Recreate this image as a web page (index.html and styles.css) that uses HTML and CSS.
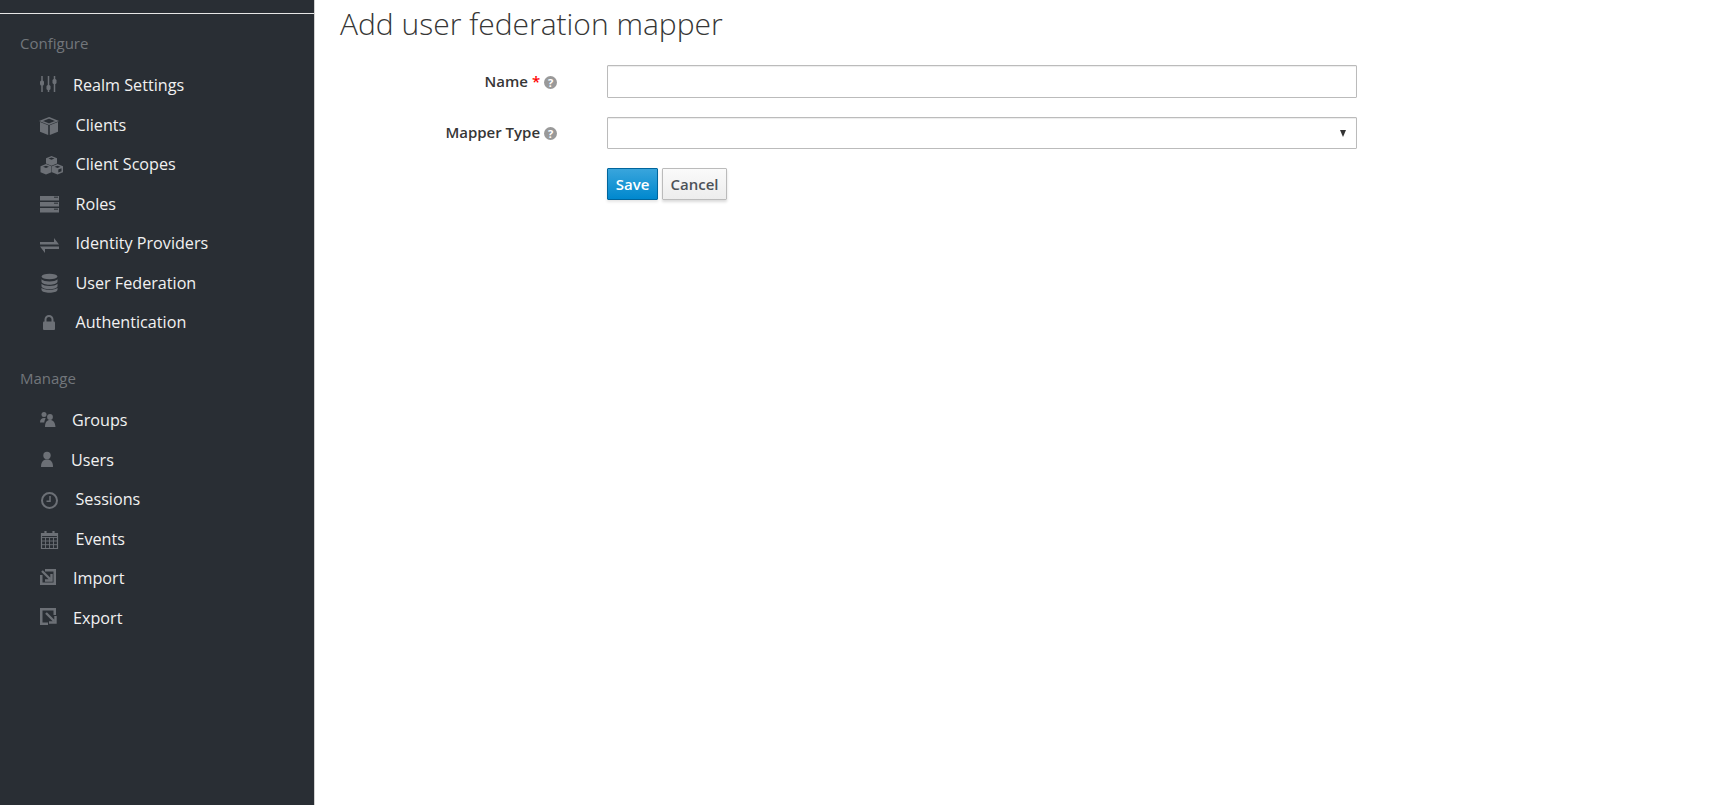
FILE: index.html
```html
<!DOCTYPE html>
<html lang="en">
<head>
<meta charset="utf-8">
<title>Add user federation mapper</title>
<link rel="stylesheet" href="styles.css">
</head>
<body>
<div class="app">
  <aside class="sidebar">
    <div class="sidebar-top"></div>
    <h2 class="nav-heading">Configure</h2>
    <ul class="nav">
      <li class="nav-item"><span class="slot slot-33"><svg viewBox="0 0 24 20"><path d="M2 1v16M8.500 1v16M14.500 1v16" stroke="currentColor" stroke-width="1.500" fill="none"/><rect x="0" y="5.500" width="4" height="5" rx="1.500" fill="currentColor"/><rect x="6.500" y="10" width="4" height="5" rx="1.500" fill="currentColor"/><rect x="12.500" y="4" width="4" height="5" rx="1.500" fill="currentColor"/></svg></span>Realm Settings</li>
      <li class="nav-item"><span class="slot slot-35"><svg viewBox="0 0 24 20"><path d="M9 2.800l8 3.200L9 9.200 1 6z" fill="none" stroke="currentColor" stroke-width="1.500"/><path d="M0 7l8.200 3.300V20L0 16.700zM18 7l-8.200 3.300V20l8.200-3.300z" fill="currentColor"/></svg></span>Clients</li>
      <li class="nav-item"><span class="slot slot-35"><svg viewBox="0 0 24 20"><g fill="currentColor"><path d="M11.500 2l5.500 2.200v5.300l-5.500 2.200L6 9.500V4.200zM11.500 3.500l-3 1.100 3 1.200 3-1.200z"/><path d="M6 10l5.500 2.200v6L6 20.500.5 18.200v-6zM6 11.700l-3 1.100 3 1.200 3-1.200z"/><path d="M17.500 10l5.500 2.200v6l-5.500 2.300-5.500-2.300v-6zM17.500 11.700l-3 1.100 3 1.200 3-1.200zM18.300 15.500v3l3.200-1.300v-3z"/></g></svg></span>Client Scopes</li>
      <li class="nav-item"><span class="slot slot-35"><svg viewBox="0 0 24 20"><path d="M0 2h19v4.500H0zM0 8h19v4.500H0zM0 14h19v4.500H0z" fill="currentColor"/><path d="M14 3.200h4M14 9.200h4M14 15.200h4" stroke="#292e34" stroke-width="1"/></svg></span>Roles</li>
      <li class="nav-item"><span class="slot slot-35"><svg viewBox="0 0 24 20"><path d="M0 9h14V5l5 6.500H0zM0 13.500h19V16H5v4z" fill="currentColor"/></svg></span>Identity Providers</li>
      <li class="nav-item"><span class="slot slot-35"><svg viewBox="0 0 24 20"><g fill="currentColor"><ellipse cx="9.500" cy="3.500" rx="8" ry="2.800"/><path d="M1.500 6.200c1.500 1.500 4.500 2.200 8 2.200s6.500-.7 8-2.200v2.600c-.5 1.800-4 3-8 3s-7.500-1.200-8-3z"/><path d="M1.500 10.700c1.500 1.500 4.500 2.200 8 2.200s6.500-.7 8-2.200v2.600c-.5 1.800-4 3-8 3s-7.500-1.200-8-3z"/><path d="M1.500 14.800c1.500 1.500 4.500 2.100 8 2.100s6.500-.6 8-2.100v2.100c-.5 1.700-4 2.800-8 2.800s-7.500-1.100-8-2.800z"/></g></svg></span>User Federation</li>
      <li class="nav-item"><span class="slot slot-35"><svg viewBox="0 0 24 20"><path d="M5.500 10V7.500a3.500 3.500 0 0 1 7 0V10" fill="none" stroke="currentColor" stroke-width="2"/><rect x="3" y="9.500" width="12" height="8.500" rx="1" fill="currentColor"/></svg></span>Authentication</li>
    </ul>
    <h2 class="nav-heading nav-heading-manage">Manage</h2>
    <ul class="nav">
      <li class="nav-item"><span class="slot slot-32"><svg viewBox="0 0 24 20"><g fill="currentColor"><circle cx="4" cy="4.500" r="2.500"/><circle cx="10" cy="7" r="2.900"/><path d="M0 12.500c0-3 1.500-4.500 4-4.500 .7 0 1.200.1 1.700.3C5 9.500 4.500 10.700 4.300 12.500zM5 17c0-4.500 1.800-7 5-7s5.200 2.500 5.500 7z"/></g></svg></span>Groups</li>
      <li class="nav-item"><span class="slot slot-31"><svg viewBox="0 0 24 20"><circle cx="7" cy="5.500" r="3.700" fill="currentColor"/><path d="M1 17c0-5 2-7.500 6-7.500s6 2.500 6 7.500z" fill="currentColor"/></svg></span>Users</li>
      <li class="nav-item"><span class="slot slot-35"><svg viewBox="0 0 24 20"><circle cx="9.500" cy="11.500" r="7.500" fill="none" stroke="currentColor" stroke-width="2"/><path d="M10 7v5.200H6.500" fill="none" stroke="currentColor" stroke-width="1.500"/></svg></span>Sessions</li>
      <li class="nav-item"><span class="slot slot-35"><svg viewBox="0 0 24 20"><path d="M1.500 4.500h16V19.500h-16z" fill="none" stroke="currentColor" stroke-width="1.200"/><path d="M1.500 8.500h16M1.500 12h16M1.500 15.700h16M5.500 8.500v11M9.500 8.500v11M13.500 8.500v11" stroke="currentColor" stroke-width=".9" fill="none"/><path d="M1.500 5.500h16" stroke="currentColor" stroke-width="3"/><path d="M5.500 2v4M13.500 2v4" stroke="currentColor" stroke-width="2.200"/></svg></span>Events</li>
      <li class="nav-item"><span class="slot slot-33"><svg viewBox="0 0 24 20"><path d="M5 1h11v16H0V7h2.500v7.500h11V3.500H5z" fill="currentColor"/><path d="M2 3l8 8M11.500 6v6.500H5" fill="none" stroke="currentColor" stroke-width="2.400"/></svg></span>Import</li>
      <li class="nav-item"><span class="slot slot-33"><svg viewBox="0 0 24 20"><path d="M0 0h16v7h-2.500V2.500h-11v12H8V17H0z" fill="currentColor"/><path d="M6 5l8 8M15.500 8v6.500H9" fill="none" stroke="currentColor" stroke-width="2.400"/></svg></span>Export</li>
    </ul>
  </aside>
  <main class="content">
    <h1 class="title">Add user federation mapper</h1>
    <form class="form">
      <div class="form-row">
        <label class="form-label">Name <span class="req">*</span> <span class="help">?</span></label>
        <input class="control" type="text">
      </div>
      <div class="form-row form-row-select">
        <label class="form-label">Mapper Type <span class="help">?</span></label>
        <div class="control control-select"><span class="caret"></span></div>
      </div>
      <div class="actions">
        <button type="button" class="btn btn-primary">Save</button>
        <button type="button" class="btn btn-default">Cancel</button>
      </div>
    </form>
  </main>
</div>
</body>
</html>
```
FILE: styles.css
```css
* { box-sizing: border-box; }
html, body { margin: 0; padding: 0; background: #fff; }
body { font-family: "Open Sans", sans-serif; color: #363636; overflow: hidden; }
.app { display: flex; height: 805px; }
.sidebar { width: 315px; flex: none; background: #292e34; border-right: 1px solid #d1d1d1; }
.sidebar-top { height: 14px; border-bottom: 1px solid #e6e6e6; }
.nav-heading { margin: 0; padding: 19.500px 0 0 20px; height: 51.400px; font-size: 15px; line-height: 19px; font-weight: 400; color: #72767b; }
.nav-heading-manage { margin-top: 7.100px; padding-top: 20px; }
.nav { list-style: none; margin: 0; padding: 0; }
.nav-item { display: flex; align-items: center; height: 39.500px; padding-left: 40px; font-size: 16.170px; color: #f1f1f1; white-space: nowrap; }
.slot { display: block; flex: none; color: #6c7076; }
.slot svg { display: block; width: 24px; height: 20px; overflow: visible; }
.slot-33 { width: 33px; }
.slot-35 { width: 35.500px; }
.slot-32 { width: 32px; }
.slot-31 { width: 31px; }
.content { flex: 1; padding-left: 25px; }
.title { margin: 0; padding-top: 3px; font-size: 30px; line-height: 41px; font-weight: 300; color: #363636; }
.form { margin-top: 21px; }
.form-row { display: flex; align-items: center; height: 33px; margin-bottom: 19px; }
.form-row-select { height: 32px; }
.form-label { width: 217px; margin-right: 50px; padding-bottom: 2px; flex: none; text-align: right; font-size: 15px; font-weight: 600; color: #363636; }
.req { color: #f00; }
.help { display: inline-block; width: 13px; height: 13px; border-radius: 50%; background: #999; color: #fff; font-size: 11px; line-height: 13px; font-weight: 700; text-align: center; vertical-align: 0; }
.control { display: block; width: 750px; height: 100%; margin: 0; border: 1px solid #bbb; background: #fff; box-shadow: inset 0 1px 1px rgba(3,3,3,.075); border-radius: 1px; }
.control-select { display: flex; align-items: center; justify-content: flex-end; padding-right: 10px; }
.caret { width: 0; height: 0; border-left: 3.500px solid transparent; border-right: 3.500px solid transparent; border-top: 7px solid #333; }
.actions { display: flex; gap: 4px; margin: 0 0 0 267px; }
.btn { height: 32px; padding: 0; font-family: inherit; font-size: 15px; font-weight: 600; border-radius: 1px; line-height: 30px; }
.btn-primary { width: 51px; color: #fff; background: linear-gradient(#39a5dc, #0088ce); border: 1px solid #00659c; box-shadow: 0 2px 3px rgba(3,3,3,.1); }
.btn-default { width: 65px; color: #4d5258; background: linear-gradient(#fafafa, #ededed); border: 1px solid #bbb; box-shadow: 0 2px 3px rgba(3,3,3,.15); }
```
